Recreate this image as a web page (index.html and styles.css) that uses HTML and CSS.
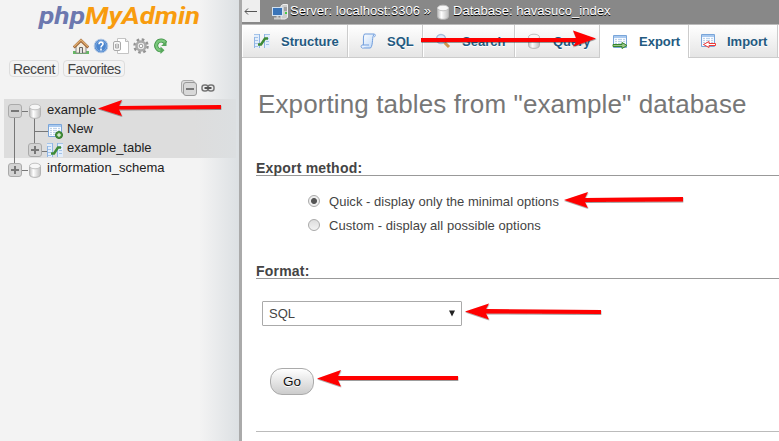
FILE: index.html
```html
<!DOCTYPE html>
<html lang="en">
<head>
<meta charset="utf-8">
<title>phpMyAdmin</title>
<link rel="stylesheet" href="styles.css">
</head>
<body>
<svg class="defs" width="0" height="0">
  <defs>
    <linearGradient id="cyl" x1="0" x2="1" y1="0" y2="0"><stop offset="0" stop-color="#bbb"/><stop offset=".35" stop-color="#fff"/><stop offset="1" stop-color="#bdbdbd"/></linearGradient>
    <linearGradient id="paper" x1="0" x2="1" y1="0" y2="1"><stop offset="0" stop-color="#fff"/><stop offset="1" stop-color="#bdd7f7"/></linearGradient>
    <symbol id="db" viewBox="0 0 16 16"><path d="M2.500 4v8.500c0 3.800 11 3.800 11 0V4z" fill="url(#cyl)" stroke="#b4b4b4"/><ellipse cx="8" cy="4" rx="5.500" ry="2.800" fill="#f7f7f7" stroke="#c2c2c2"/></symbol>
    <symbol id="structure" viewBox="0 0 16 16"><path d="M0 1h6v14H0zM11 1h5v14h-5z" fill="#e3eefb"/><path d="M.5 4v11M5.500 1v14M10.500 1v14" stroke="#8fb5e4"/><path d="M0 1.500h5M11 1.500h5M1 4.500h3M1 7.500h3M1 10.500h3M1 13.500h3M12 5.500h3M12 8.500h3M12 11.500h3" stroke="#a4c4e9"/><path d="M4 11.500h3l4-6h3" fill="none" stroke="#3d8a36" stroke-width="2.400"/></symbol>
    <symbol id="table" viewBox="0 0 16 16"><path d="M1.500 1.500h13v12h-13z" fill="#f3f8ff" stroke="#79a5d9"/><path d="M2 3h12" stroke="#a9c9ef" stroke-width="2"/><path d="M3 5.500h10M3 7.500h10M3 9.500h10M3 11.500h10" stroke="#bed2e8"/><path d="M5.500 4v9M10.500 4v9" stroke="#fff"/></symbol>
    <symbol id="toggle" viewBox="0 0 14 14"><rect x=".5" y=".5" width="13" height="13" rx="2.500" fill="#d3d3d3" stroke="#aaa"/><path d="M3 7h8" stroke="#777" stroke-width="2"/></symbol>
  </defs>
</svg>
<div class="app">
  <aside class="sidebar">
    <svg class="logo" width="170" height="32" viewBox="0 0 170 32"><text x="3" y="24" textLength="46" lengthAdjust="spacingAndGlyphs" fill="#6c78af">php</text><text x="49" y="24" textLength="115" lengthAdjust="spacingAndGlyphs" fill="#f89c0e">MyAdmin</text></svg>
    <div class="quick">
      <svg viewBox="0 0 16 16"><path d="M0 14.500h16" stroke="#66b864" stroke-width="3"/><path d="M3 7l5-4 5 4v8H3z" fill="#f3eee1" stroke="#888"/><path d="M.7 9.500L8 2.500l7.300 7" fill="none" stroke="#9d6437" stroke-width="2.800"/><path d="M1 8.800L8 2l7 6.800" fill="none" stroke="#e0ae70" stroke-width="1.300"/><path d="M6.500 15V9.500h3V15" fill="#ddd" stroke="#666"/></svg>
      <svg viewBox="0 0 16 16"><circle cx="8" cy="8" r="6.800" fill="#4c86ce" stroke="#b0c6e3"/><circle cx="8" cy="8" r="5.300" fill="none" stroke="#81abe0"/><path d="M6 6.200c0-3 4-2.500 4-.3C10 7.500 8 7.500 8 9.500M8 10.500v2" fill="none" stroke="#fff" stroke-width="1.600"/></svg>
      <svg viewBox="0 0 16 16"><path d="M4.500.5h8l3 3v12h-11z" fill="#fff" stroke="#c4c4c4"/><path d="M12.500.5v3h3" fill="#eee" stroke="#bbb"/><rect x=".5" y="3.500" width="7" height="9" rx="1.500" fill="#f6f6f6" stroke="#aaa"/><path d="M2.500 6v4h3V6M4 5.500v4" fill="none" stroke="#aaa"/></svg>
      <svg viewBox="0 0 16 16"><circle cx="8" cy="8" r="6.500" fill="none" stroke="#929292" stroke-width="2.500" stroke-dasharray="2.550 2.550"/><circle cx="8" cy="8" r="4.500" fill="#eee" stroke="#aaa" stroke-width="2.500"/><circle cx="8" cy="8" r="1.800" fill="#fff" stroke="#999"/></svg>
      <svg viewBox="0 0 16 16"><path d="M12.500 5A5 5 0 1 0 8 12.500" fill="none" stroke="#3c8f43" stroke-width="4"/><path d="M12.500 5A5 5 0 1 0 8 12.500" fill="none" stroke="#7ac77b" stroke-width="2.400"/><path d="M8 8h5.500V3M7.500 8.500v7.500l4-3.700z" fill="#57a75b"/></svg>
    </div>
    <div class="pills"><span class="pill recent">Recent</span><span class="pill favorites">Favorites</span></div>
    <div class="controls">
      <svg width="16" height="16" viewBox="0 0 16 16"><rect x=".5" y=".5" width="13" height="13" rx="2.500" fill="#ddd" stroke="#aaa"/><rect x="2.500" y="2.500" width="13" height="13" rx="2.500" fill="#d8d8d8" stroke="#999"/><path d="M5 9h8" stroke="#777" stroke-width="2"/></svg>
      <svg width="14" height="8" viewBox="0 0 14 8"><g fill="none" stroke="#777" stroke-width="1.500"><rect x="1" y="1" width="6" height="6" rx="2.500"/><rect x="7" y="1" width="6" height="6" rx="2.500"/></g><path d="M3.500 4h7" stroke="#555" stroke-width="2"/></svg>
    </div>
    <div class="tree">
      <svg class="treelines" width="60" height="88"><path d="M10.500 15v54M10.500 12.500H24M10.500 71.500H24M30.500 18v32M30.500 32.500H45M30.500 52.500H45" fill="none" stroke="#777"/></svg>
      <div class="node"><svg class="tog"><use href="#toggle"/></svg><svg class="ico"><use href="#db"/></svg><span class="ex">example</span></div>
      <div class="node sub new"><svg class="ico" viewBox="0 0 16 16"><use href="#table"/><circle cx="12" cy="12" r="3.500" fill="#4b963d" stroke="#2d7529"/><path d="M12 10v4M10 12h4" stroke="#fff"/></svg><span>New</span></div>
      <div class="node sub tbl"><svg class="tog" viewBox="0 0 14 14"><use href="#toggle"/><path d="M7 3v8" stroke="#777" stroke-width="2"/></svg><svg class="ico"><use href="#structure"/></svg><span class="et">example_table</span></div>
      <div class="node info"><svg class="tog" viewBox="0 0 14 14"><use href="#toggle"/><path d="M7 3v8" stroke="#777" stroke-width="2"/></svg><svg class="ico"><use href="#db"/></svg><span class="is">information_schema</span></div>
    </div>
  </aside>
  <main class="main">
    <header class="crumbs">
      <span class="back"><svg width="13" height="8" viewBox="0 0 13 8"><path d="M13 4.500H1M4 1.500l-3 3 3 3" fill="none" stroke="#555"/></svg></span>
      <svg class="server" width="16" height="16" viewBox="0 0 16 16"><path d="M9 2l2-1.500h4.500v13L13 15H9z" fill="#ccc" stroke="#eee"/><path d="M12 4h3M12 6h3" stroke="#777"/><path d="M14 8v2" stroke="#4c4" stroke-width="2"/><rect x=".5" y="3.500" width="10" height="8" fill="#3974b9" stroke="#d3e2f2"/><path d="M2 14.500h7M5.500 12v2" stroke="#ccc" stroke-width="2"/></svg>
      <span class="srv">Server: localhost:3306 »</span>
      <svg class="cdb" width="16" height="16"><use href="#db"/></svg>
      <span class="dbn">Database: havasuco_index</span>
    </header>
    <nav class="tabs">
      <a class="tab t1"><svg><use href="#structure"/></svg><span>Structure</span></a>
      <a class="tab t2"><svg viewBox="0 0 16 16"><path d="M4.500 1h10c-3 2-1 11-4 14H2c3-3 0-11 2.500-14z" fill="url(#paper)" stroke="#6e9cdc"/><path d="M14.500 1c2 2-.5 3-.5 3M2 15c-2-2 0-3 0-3h7" fill="#eaf3ff" stroke="#6e9cdc"/></svg><span>SQL</span></a>
      <a class="tab t3"><svg viewBox="0 0 16 16"><path d="M9 9l5 5" stroke="#ce964f" stroke-width="3"/><circle cx="6" cy="6" r="4.500" fill="#dceafa" stroke="#a6bdd9" stroke-width="1.500"/></svg><span>Search</span></a>
      <a class="tab t4"><svg><use href="#db"/></svg><span>Query</span></a>
      <a class="tab t5 active"><svg viewBox="0 0 16 16"><use href="#table"/><path d="M1 10.500h9V8.500l5 3-5 3v-2H1z" fill="#9bc48c" stroke="#36872c"/></svg><span>Export</span></a>
      <a class="tab t6"><svg viewBox="0 0 16 16"><use href="#table"/><path d="M15.500 10.500H9v-2L3.500 11.500 9 14.500v-2h6.500z" fill="#fff" stroke="#ee3836"/></svg><span>Import</span></a>
      <span class="tab t7"></span>
    </nav>
    <form class="content">
      <h1><span>Exporting tables from "example" database</span></h1>
      <h2 class="method"><span>Export method:</span></h2>
      <div class="choices">
        <label><i class="radio on"></i><span class="qk">Quick - display only the minimal options</span></label>
        <label><i class="radio"></i><span class="cu">Custom - display all possible options</span></label>
      </div>
      <h2 class="format"><span>Format:</span></h2>
      <div class="select"><span>SQL</span><svg width="6" height="7" viewBox="0 0 6 7"><path d="M0 .5h6L3 6.500z" fill="#222"/></svg></div>
      <button class="go" type="button">Go</button>
      <hr>
    </form>
  </main>
</div>
<svg class="arrows" width="779" height="441" viewBox="0 0 779 441">
  <defs><filter id="shade" x="-10%" y="-30%" width="120%" height="180%"><feDropShadow dx="0.300" dy="0.800" stdDeviation="0.400" flood-color="#333" flood-opacity=".6"/></filter></defs>
  <g fill="#f00" filter="url(#shade)">
    <path d="M98 108.500L122 100l-3 6 102-1v4l-102 .5 3 6.500z"/>
    <path d="M421 38h155l-3-7.500 23 8-23 8 3-4.500H421z"/>
    <path d="M564 200l24-8-3 6 98-1v4.500l-98 .5 3 6z"/>
    <path d="M465 311.500l24-8-3 5.500 115 1v4l-115-.5 3 6z"/>
    <path d="M317 378.500l24-8.500-3 6h120v4H338l3 6.500z"/>
  </g>
</svg>
</body>
</html>
```

FILE: styles.css
```css
* { box-sizing: border-box; }
body { margin: 0; overflow: hidden; font: 13px "Liberation Sans", Arial, sans-serif; color: #444; background: #fff; }
svg { display: block; flex: none; }
.defs { position: absolute; }
.app { display: flex; width: 779px; height: 441px; }
.sidebar { width: 242px; flex: none; border-right: 3px solid #aaa; background: linear-gradient(to right, #f3f3f3 200px, #dce0e3 239px); }
.logo { margin-left: 36px; font: italic bold 24px Roboto, sans-serif; }
.quick { display: flex; gap: 4px; margin: 6px 0 0 73px; }
.quick svg { width: 16px; height: 16px; }
.pills { display: flex; gap: 4px; margin: 6px 0 0 9px; }
.pill { height: 17px; border: 1px solid #ddd; border-radius: 4px; font-size: 14px; line-height: 16px; letter-spacing: -.1px; text-align: center; white-space: nowrap; }
.recent { width: 50px; letter-spacing: -.4px; }
.favorites { width: 62px; letter-spacing: -.5px; }
.controls { display: flex; align-items: center; gap: 4px; margin: 3px 0 0 181px; }
.tree { position: relative; margin: 3px 0 0 4px; padding-top: 1px; color: #222; background: linear-gradient(to right, #ddd 190px, #dcdfe1) no-repeat 0 0 / 232px 59px; }
.treelines { position: absolute; left: 0; top: 0; }
.node { position: relative; display: flex; align-items: center; height: 20px; padding-left: 4px; white-space: nowrap; }
.tog { width: 14px; height: 14px; }
.ico { width: 16px; height: 16px; margin: 0 4px 0 5px; }
.node > svg { position: relative; top: 1px; }
.node > span { line-height: 18px; margin-top: -1px; }
.sub { padding-left: 24px; height: 19px; }
.new .ico { margin-left: 19px; }
.info { height: 21px; }
.is { letter-spacing: .03px; }
.main { flex: 1; min-width: 0; }
.crumbs { display: flex; height: 24px; background: #888; color: #fff; text-shadow: 0 1px 0 #000; white-space: nowrap; line-height: 22px; }
.back { width: 18px; height: 22px; padding: 7px 0 0 2px; background: #eee; }
.server { margin: 4px 2px 0 12px; }
.cdb { margin: 4px 2px 0 4px; }
.srv { width: 141px; letter-spacing: .03px; }
.dbn { letter-spacing: .03px; }
.tabs { display: flex; height: 34px; background: linear-gradient(#fff, #e5e5e5); border-top: 1px solid #bbb; border-bottom: 1px solid #ccc; }
.tab { display: flex; align-items: center; flex: none; padding-left: 12px; border-right: 1px solid #ccc; border-left: 1px solid #fff; color: #235a81; font-weight: bold; text-shadow: 0 1px 0 #fff; white-space: nowrap; }
.tab svg { width: 16px; height: 16px; margin-right: 11px; }
.t1 { width: 106px; padding-left: 11px; }
.t2 { width: 75px; padding-left: 11px; }
.t3 { width: 92px; padding-left: 11px; }
.t4 { width: 85px; padding-left: 10px; }
.t5 { width: 89px; padding-left: 11px; }
.t6 { width: 89px; padding-left: 10px; }
.t7 { width: 1px; padding: 0; border-right: 0; }
.active { background: #fff; height: 33px; }
.content { margin-left: 14px; }
h1 { margin: 0; padding: 30px 0 0 2px; height: 102px; font-size: 26px; font-weight: normal; line-height: 32px; letter-spacing: .12px; color: #777; white-space: nowrap; }
h2 { margin: 0; height: 16px; border-bottom: 1px solid #999; font-size: 14px; line-height: 17px; letter-spacing: .2px; }
.choices { display: grid; gap: 8px; padding: 17px 0 0 52px; }
.choices label { display: flex; align-items: center; height: 16px; letter-spacing: .04px; white-space: nowrap; }
.radio { width: 12px; height: 12px; margin-right: 9px; border: 1px solid #aaa; border-radius: 50%; background: linear-gradient(#ddd, #f3f3f3); }
.radio.on { background: radial-gradient(circle, #555 0 2.5px, #eee 3.5px); }
.format { margin-top: 30px; }
.select { display: flex; align-items: center; justify-content: space-between; width: 200px; height: 25px; margin: 22px 0 0 6px; padding: 0 6px; border: 1px solid #aaa; border-radius: 1px; }
.go { display: block; width: 44px; height: 27px; margin: 42px 0 0 14px; padding: 0 0 1px; border: 1px solid #aaa; border-radius: 12px; background: linear-gradient(#fff, #ccc); color: #111; font: 13.5px "Liberation Sans", Arial, sans-serif; text-shadow: 0 1px 0 #fff; }
hr { height: 1px; margin: 36px 0 0; border: 0; background: #bbb; }
.arrows { position: absolute; left: 0; top: 0; pointer-events: none; }
```
